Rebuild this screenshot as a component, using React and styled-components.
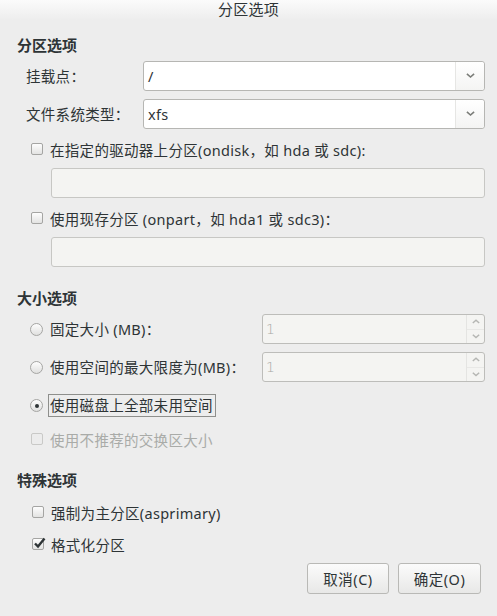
import React from "react";
import styled, { createGlobalStyle, css } from "styled-components";

const Global = createGlobalStyle`
  html, body { margin: 0; padding: 0; background: #ededed; }
  body {
    font-family: "Noto Sans", "Noto Sans CJK SC", sans-serif;
    font-size: 14.5px;
    letter-spacing: 0.3px;
    color: #2e3436;
  }
`;

const Window = styled.div`
  width: 497px;
  height: 616px;
  background: #ededed;
  display: flex;
  flex-direction: column;
  overflow: hidden;
`;

const TitleBar = styled.div`
  height: 20px;
  display: flex;
  justify-content: center;
  align-items: flex-start;
  background: linear-gradient(#fbfbfb, #ededed);
  font-size: 15px;
  line-height: 18px;
  color: #2e3436;
`;

const Body = styled.div`
  display: flex;
  flex-direction: column;
  padding: 0 12px 0 17px;
`;

const Heading = styled.div`
  font-weight: bold;
  font-size: 15px;
  line-height: 20px;
  height: 20px;
  letter-spacing: 0;
  margin-top: ${(p) => p.$mt}px;
`;

const FormGrid = styled.div`
  display: grid;
  grid-template-columns: 126px 342px;
  row-gap: 8px;
  margin-top: 6px;
  align-items: center;
`;

const Label = styled.div`
  padding-left: 9px;
  line-height: 20px;
`;

const Combo = styled.div`
  height: 30px;
  box-sizing: border-box;
  border: 1px solid #b6b6b3;
  border-radius: 3px;
  background: #ffffff;
  display: flex;
  align-items: stretch;
`;

const ComboText = styled.div`
  flex: 1;
  display: flex;
  align-items: center;
  padding-left: 4px;
  color: #2e3436;
`;

const ComboButton = styled.div`
  width: 28px;
  border-left: 1px solid #e6e6e4;
  background: linear-gradient(#ffffff, #f4f4f3);
  border-radius: 0 3px 3px 0;
  display: flex;
  align-items: center;
  justify-content: center;
`;

const CheckRow = styled.div`
  display: flex;
  align-items: center;
  height: ${(p) => p.$h || 20}px;
  margin-top: ${(p) => p.$mt}px;
  padding-left: ${(p) => p.$indent || 14}px;
  color: ${(p) => (p.$disabled ? "#a9aba8" : "#2e3436")};
`;

const Box = styled.span`
  width: 12px;
  height: 12px;
  box-sizing: border-box;
  border: 1px solid ${(p) => (p.$disabled ? "#c9c9c7" : "#a5a5a3")};
  border-radius: 2px;
  background: ${(p) =>
    p.$disabled ? "#ececec" : "linear-gradient(#fdfdfd, #e3e3e2)"};
  margin-right: 7px;
  flex: none;
  position: relative;
  display: flex;
  align-items: center;
  justify-content: center;
`;

const Radio = styled.span`
  width: 13px;
  height: 13px;
  box-sizing: border-box;
  border: 1px solid #a5a5a3;
  border-radius: 50%;
  background: linear-gradient(#fdfdfd, #e0e0df);
  margin-right: 7px;
  flex: none;
  display: flex;
  align-items: center;
  justify-content: center;
  &::after {
    content: "";
    width: 4px;
    height: 4px;
    border-radius: 50%;
    background: ${(p) => (p.$checked ? "#2e3436" : "transparent")};
  }
`;

const Focus = styled.span`
  border: 1px solid #8e8f8c;
  padding: 1px 2px 1px 1px;
  margin-left: -2px;
  line-height: 19px;
`;

const Entry = styled.div`
  height: 30px;
  box-sizing: border-box;
  margin-left: 34px;
  width: 434px;
  margin-top: ${(p) => p.$mt}px;
  border: 1px solid #c7c7c4;
  border-radius: 3px;
  background: #f4f4f2;
`;

const SizeRow = styled.div`
  display: flex;
  align-items: center;
  justify-content: space-between;
  margin-top: ${(p) => p.$mt}px;
  padding-left: 13px;
`;

const RadioLabel = styled.div`
  display: flex;
  align-items: center;
  line-height: 20px;
`;

const Spin = styled.div`
  width: 223px;
  height: 30px;
  box-sizing: border-box;
  border: 1px solid #bdbdba;
  border-radius: 3px;
  background: #f4f4f2;
  display: flex;
`;

const SpinValue = styled.div`
  flex: 1;
  display: flex;
  align-items: center;
  padding-left: 3px;
  color: #a7a9a5;
  font-family: "DejaVu Sans", sans-serif;
  font-size: 14px;
  font-weight: 300;
`;

const SpinButtons = styled.div`
  width: 17px;
  border-left: 1px solid #e4e4e2;
  display: flex;
  flex-direction: column;
`;

const SpinHalf = styled.div`
  flex: 1;
  display: flex;
  align-items: center;
  justify-content: center;
  ${(p) =>
    p.$top &&
    css`
      border-bottom: 1px solid #e8e8e6;
    `}
`;

const ButtonBar = styled.div`
  display: flex;
  justify-content: flex-end;
  gap: 9px;
  margin-top: 9px;
  padding-right: 4px;
`;

const Button = styled.button`
  height: 31px;
  width: ${(p) => p.$w}px;
  box-sizing: border-box;
  border: 1px solid #b9b9b6;
  border-radius: 3px;
  background: linear-gradient(#fbfbfb, #e8e8e7);
  font-family: "Noto Sans", "Noto Sans CJK SC", sans-serif;
  font-size: 14.5px;
  color: #2e3436;
  padding: 0;
  letter-spacing: 0.5px;
`;

const Chevron = ({ up, color = "#7b7d79", w = 9 }) => (
  <svg width={w} height={w * 0.6} viewBox="0 0 10 6">
    <path
      d={up ? "M1 5 L5 1.5 L9 5" : "M1 1 L5 4.5 L9 1"}
      fill="none"
      stroke={color}
      strokeWidth="1.8"
    />
  </svg>
);

const Check = () => (
  <svg
    width="13"
    height="12"
    viewBox="0 0 13 12"
    style={{ position: "absolute", left: 0, top: -2 }}
  >
    <path d="M2 6.5 L5 9.5 L11.5 1.5" fill="none" stroke="#2e3436" strokeWidth="2.4" />
  </svg>
);

export default function App() {
  return (
    <Window>
      <Global />
      <TitleBar>分区选项</TitleBar>
      <Body>
        <Heading $mt={15}>分区选项</Heading>
        <FormGrid>
          <Label>挂载点：</Label>
          <Combo>
            <ComboText>/</ComboText>
            <ComboButton>
              <Chevron />
            </ComboButton>
          </Combo>
          <Label>文件系统类型：</Label>
          <Combo>
            <ComboText>xfs</ComboText>
            <ComboButton>
              <Chevron />
            </ComboButton>
          </Combo>
        </FormGrid>

        <CheckRow $mt={10}>
          <Box />
          在指定的驱动器上分区(ondisk，如 hda 或 sdc):
        </CheckRow>
        <Entry $mt={9} />
        <CheckRow $mt={10}>
          <Box />
          使用现存分区 (onpart，如 hda1 或 sdc3)：
        </CheckRow>
        <Entry $mt={9} />

        <Heading $mt={21}>大小选项</Heading>
        <SizeRow $mt={6}>
          <RadioLabel>
            <Radio />
            固定大小 (MB)：
          </RadioLabel>
          <Spin>
            <SpinValue>1</SpinValue>
            <SpinButtons>
              <SpinHalf $top>
                <Chevron up color="#b5b6b3" w={8} />
              </SpinHalf>
              <SpinHalf>
                <Chevron color="#b5b6b3" w={8} />
              </SpinHalf>
            </SpinButtons>
          </Spin>
        </SizeRow>
        <SizeRow $mt={8}>
          <RadioLabel>
            <Radio />
            使用空间的最大限度为(MB)：
          </RadioLabel>
          <Spin>
            <SpinValue>1</SpinValue>
            <SpinButtons>
              <SpinHalf $top>
                <Chevron up color="#b5b6b3" w={8} />
              </SpinHalf>
              <SpinHalf>
                <Chevron color="#b5b6b3" w={8} />
              </SpinHalf>
            </SpinButtons>
          </Spin>
        </SizeRow>
        <CheckRow $mt={12} $h={23} $indent={13}>
          <Radio $checked />
          <Focus>使用磁盘上全部未用空间</Focus>
        </CheckRow>
        <CheckRow $mt={12} $disabled>
          <Box $disabled />
          使用不推荐的交换区大小
        </CheckRow>

        <Heading $mt={21}>特殊选项</Heading>
        <CheckRow $mt={12} $indent={15}>
          <Box />
          强制为主分区(asprimary)
        </CheckRow>
        <CheckRow $mt={12} $indent={15}>
          <Box>
            <Check />
          </Box>
          格式化分区
        </CheckRow>

        <ButtonBar>
          <Button $w={82}>取消(C)</Button>
          <Button $w={83}>确定(O)</Button>
        </ButtonBar>
      </Body>
    </Window>
  );
}
